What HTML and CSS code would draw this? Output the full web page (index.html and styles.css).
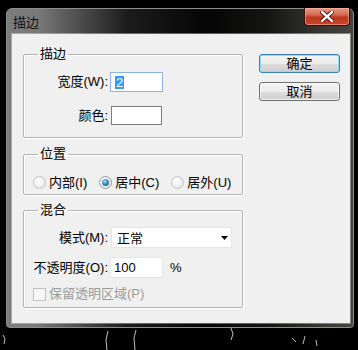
FILE: index.html
```html
<!DOCTYPE html>
<html lang="zh-CN">
<head>
    <meta charset="UTF-8">
    <title>描边</title>
    <link rel="stylesheet" href="styles.css">
</head>
<body>
    <div class="window">
        <div class="titlebar">
            <span class="title">描边</span>
            <button class="close-btn" aria-label="关闭">
                <svg width="14" height="11" viewBox="0 0 14 11">
                    <path d="M2 1 L12 10 M12 1 L2 10" stroke="#3a0c06" stroke-width="4.2" stroke-linecap="square"/>
                    <path d="M2 1 L12 10 M12 1 L2 10" stroke="#ffffff" stroke-width="2.4" stroke-linecap="square"/>
                </svg>
            </button>
        </div>
        <div class="client">
            <div class="groups">
                <fieldset class="group group-stroke">
                    <legend>描边</legend>
                    <div class="row">
                        <label class="row-label">宽度(W):</label>
                        <div class="text-input focused"><span class="selected">2</span></div>
                    </div>
                    <div class="row row-color">
                        <label class="row-label">颜色:</label>
                        <div class="color-swatch"></div>
                    </div>
                </fieldset>

                <fieldset class="group group-position">
                    <legend>位置</legend>
                    <div class="radio-row">
                        <span class="radio-item"><span class="radio"></span>内部(I)</span>
                        <span class="radio-item"><span class="radio checked"><span class="radio-dot"></span></span>居中(C)</span>
                        <span class="radio-item"><span class="radio"></span>居外(U)</span>
                    </div>
                </fieldset>

                <fieldset class="group group-blend">
                    <legend>混合</legend>
                    <div class="row">
                        <label class="row-label">模式(M):</label>
                        <div class="select">
                            <span>正常</span>
                            <svg class="select-arrow" width="7" height="4" viewBox="0 0 7 4">
                                <polygon points="0,0 7,0 3.5,4" fill="#000"/>
                            </svg>
                        </div>
                    </div>
                    <div class="row row-opacity">
                        <label class="row-label">不透明度(O):</label>
                        <div class="text-input plain">100</div>
                        <span class="unit">%</span>
                    </div>
                    <div class="check-row">
                        <span class="checkbox"></span>
                        <span class="check-label">保留透明区域(P)</span>
                    </div>
                </fieldset>
            </div>

            <div class="buttons">
                <button class="btn btn-default">确定</button>
                <button class="btn">取消</button>
            </div>
        </div>
    </div>

    <!-- stray marks below the dialog -->
    <svg class="scratches" width="358" height="22" viewBox="0 0 358 22">
        <g stroke="#ffffff" stroke-width="1" fill="none" opacity="0.75">
            <path d="M3 7 L5 11 L4 16"/>
            <path d="M108 3 L106 12 L107 22"/>
            <path d="M136 2 L134 10 L135 22"/>
            <path d="M231 0 L233 6 L231 12"/>
            <path d="M292 10 L296 14 M305 8 L303 16 M316 12 L317 18"/>
        </g>
    </svg>
</body>
</html>
```

FILE: styles.css
```css
/* Photoshop "描边" dialog, Windows 7 Aero look */
body {
    margin: 0;
    width: 358px;
    height: 350px;
    overflow: hidden;
    background-color: #000;
    font-family: "Liberation Sans", "Noto Sans CJK SC", sans-serif;
    font-size: 13px;
    color: #000;
}

.window {
    box-sizing: border-box;
    width: 348px;
    height: 320px;
    margin: 8px 0 0 6px;
    padding: 0 3px 4px 5px;
    border: 1px solid #8e8e8e;
    border-radius: 6px 6px 4px 4px;
    background: linear-gradient(to right, #7c7c7c 0, #7a7a7a 30px, #5a5a5a 60px, #1c1c1c 120px, #050505 200px, #141412 260px, #3a3a34 320px, #45453f 100%);
}

/* title bar */
.titlebar {
    display: flex;
    align-items: flex-start;
    height: 25px;
}

.title {
    margin: 6px 0 0 1px;
    line-height: 16px;
    color: #111;
}

.close-btn {
    display: flex;
    align-items: center;
    justify-content: center;
    width: 46px;
    height: 18px;
    margin: -1px 0 0 auto;
    padding: 0;
    border: 1px solid #3b0d07;
    border-top: none;
    border-radius: 0 0 4px 4px;
    background: linear-gradient(#e59a86 0%, #d46a54 40%, #bf3620 55%, #c8442a 100%);
    box-shadow: inset 0 0 0 1px rgba(255, 200, 180, 0.5);
}

/* client area */
.client {
    display: flex;
    align-items: flex-start;
    box-sizing: border-box;
    height: 289px;
    padding: 12px 0 0 11px;
    background-color: #f0f0f0;
    box-shadow: 0 0 0 1px rgba(255, 255, 255, 0.35);
}

.groups {
    display: flex;
    flex-direction: column;
    width: 220px;
}

.group {
    margin: 0;
    padding: 0 8px 0 9px;
    border: 1px solid #b4b4b4;
    border-radius: 2px;
    box-shadow: inset 1px 1px 0 #fff, 1px 1px 0 #fff;
}

.group legend {
    margin-left: 5px;
    padding: 0 2px;
    line-height: 16px;
}

.group-stroke {
    padding-top: 10px;
    padding-bottom: 12px;
}

.group-position {
    margin-top: 8px;
    padding-top: 12px;
    padding-bottom: 3px;
}

.group-blend {
    margin-top: 7px;
    padding-top: 9px;
    padding-bottom: 5px;
}

.row {
    display: flex;
    align-items: center;
}

.row-label {
    width: 75px;
    margin-right: 2px;
    text-align: right;
    line-height: 16px;
    white-space: nowrap;
}

.row-color {
    margin-top: 14px;
}

.row-opacity {
    margin-top: 9px;
}

.text-input {
    box-sizing: border-box;
    width: 53px;
    height: 20px;
    display: flex;
    align-items: center;
    background-color: #fff;
    border: 1px solid #e2e3ea;
}

.text-input.focused {
    padding-left: 4px;
    border-color: #8db2e3;
}

.text-input.plain {
    height: 21px;
    padding-left: 3px;
    border-color: #e6e6e6;
}

.selected {
    display: inline-block;
    padding: 0 1px;
    line-height: 13px;
    color: #fff;
    background-color: #3399ff;
}

.color-swatch {
    box-sizing: border-box;
    width: 51px;
    height: 19px;
    margin-left: 1px;
    background-color: #fff;
    border: 1px solid #7c7c7c;
}

.select {
    box-sizing: border-box;
    display: flex;
    align-items: center;
    width: 121px;
    height: 21px;
    margin-left: 1px;
    padding: 0 3px 0 5px;
    background-color: #fff;
    border: 1px solid #e6e6e6;
}

.select-arrow {
    margin-left: auto;
}

.unit {
    margin-left: 7px;
}

/* radios */
.radio-row {
    display: flex;
    align-items: center;
    gap: 12px;
    height: 17px;
}

.radio-item {
    display: flex;
    align-items: center;
    line-height: 16px;
    white-space: nowrap;
}

.radio {
    box-sizing: border-box;
    display: flex;
    align-items: center;
    justify-content: center;
    width: 13px;
    height: 13px;
    margin-right: 3px;
    border: 1px solid #c4c4c4;
    border-radius: 50%;
    background: radial-gradient(circle at 40% 40%, #ffffff 0, #f4f4f4 40%, #dcdcdc 100%);
}

.radio.checked {
    border-color: #8f9aa5;
}

.radio-dot {
    width: 7px;
    height: 7px;
    border-radius: 50%;
    background: radial-gradient(circle at 40% 35%, #a8dcf8 0, #3d8cc6 45%, #10406b 100%);
}

/* disabled checkbox */
.check-row {
    display: flex;
    align-items: center;
    height: 16px;
    margin-top: 8px;
}

.checkbox {
    box-sizing: border-box;
    width: 13px;
    height: 13px;
    margin-right: 3px;
    border: 1px solid #c2c2c2;
    background-color: #f6f6f6;
}

.check-label {
    color: #9b9b9b;
    line-height: 16px;
}

/* buttons */
.buttons {
    display: flex;
    flex-direction: column;
    gap: 9px;
    margin: 8px 0 0 16px;
}

.btn {
    box-sizing: border-box;
    width: 81px;
    height: 19px;
    padding: 0;
    font-family: inherit;
    font-size: 13px;
    line-height: 17px;
    color: #000;
    border: 1px solid #707070;
    border-radius: 3px;
    background: linear-gradient(#f4f4f4 0%, #ebebeb 50%, #dddddd 51%, #cfcfcf 100%);
    box-shadow: inset 0 0 0 1px rgba(255, 255, 255, 0.7);
}

.btn-default {
    border-color: #3c7fb1;
    box-shadow: inset 0 0 0 1px #8fdcf8;
}

.scratches {
    display: block;
}
```
